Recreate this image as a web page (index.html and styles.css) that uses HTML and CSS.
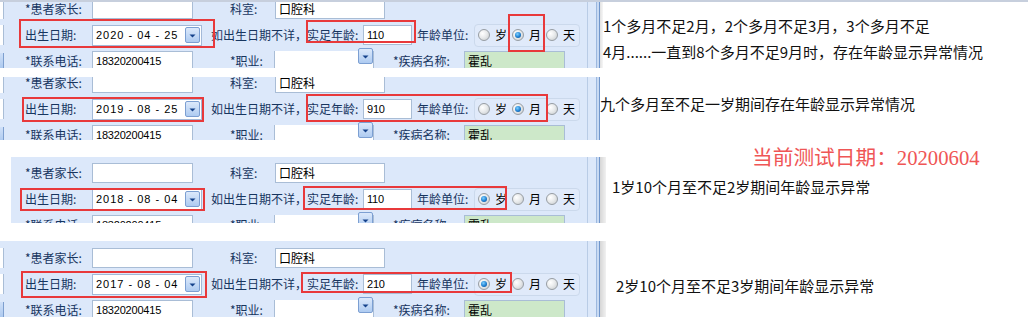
FILE: index.html
```html
<!DOCTYPE html>
<html lang="zh-CN">
<head>
<meta charset="utf-8">
<title>年龄显示异常测试</title>
<link rel="stylesheet" href="styles.css">
</head>
<body>
<div class="topline"></div>

<section class="strip strip1">
  <div class="shot shot1">
    <div class="form form1">
      <div class="row">
        <span class="edge"></span>
        <span class="lbl lbl-a">*患者家长:</span>
        <span class="inp inp-a"></span>
        <span class="lbl lbl-b">科室:</span>
        <span class="inp inp-b">口腔科</span>
      </div>
      <div class="row">
        <span class="edge"></span>
        <span class="lbl lbl-a">出生日期:</span>
        <span class="date"><span class="date-txt">2020 - 04 - 25</span><span class="ddbtn"><svg viewBox="0 0 13 14" width="13" height="14"><path d="M3.5 6.5h6l-3 3z" fill="#15428b"/></svg></span></span>
        <span class="lbl note">如出生日期不详，</span>
        <span class="lbl lbl-age">实足年龄:</span>
        <span class="inp inp-age num">110</span>
        <span class="lbl lbl-unit">年龄单位:</span>
        <span class="radios">
          <span class="opt"><i class="rb"></i>岁</span>
          <span class="opt"><i class="rb on"></i>月</span>
          <span class="opt"><i class="rb"></i>天</span>
        </span>
      </div>
      <div class="row">
        <span class="edge edge-btn"></span>
        <span class="lbl lbl-a">*联系电话:</span>
        <span class="inp inp-a num">18320200415</span>
        <span class="lbl lbl-c">*职业:</span>
        <span class="select"><span class="ddbtn"><svg viewBox="0 0 13 14" width="13" height="14"><path d="M3.5 6.5h6l-3 3z" fill="#15428b"/></svg></span></span>
        <span class="lbl lbl-dis">*疾病名称:</span>
        <span class="inp inp-green">霍乱</span>
      </div>
      <span class="mark m1a"></span>
      <span class="mark m1b"></span>
      <span class="mark m1c"></span>
    </div>
    <span class="vlight"></span>
    <span class="vblue"></span>
    <span class="vshade"></span>
  </div>
  <div class="notes notes1">
    <p>1个多月不足2月，2个多月不足3月，3个多月不足</p>
    <p>4月......一直到8个多月不足9月时，存在年龄显示异常情况</p>
  </div>
</section>

<section class="strip strip2">
  <div class="shot shot2">
    <div class="form form2">
      <div class="row">
        <span class="edge"></span>
        <span class="lbl lbl-a">*患者家长:</span>
        <span class="inp inp-a"></span>
        <span class="lbl lbl-b">科室:</span>
        <span class="inp inp-b">口腔科</span>
      </div>
      <div class="row">
        <span class="edge"></span>
        <span class="lbl lbl-a">出生日期:</span>
        <span class="date"><span class="date-txt">2019 - 08 - 25</span><span class="ddbtn"><svg viewBox="0 0 13 14" width="13" height="14"><path d="M3.5 6.5h6l-3 3z" fill="#15428b"/></svg></span></span>
        <span class="lbl note">如出生日期不详，</span>
        <span class="lbl lbl-age">实足年龄:</span>
        <span class="inp inp-age num">910</span>
        <span class="lbl lbl-unit">年龄单位:</span>
        <span class="radios">
          <span class="opt"><i class="rb"></i>岁</span>
          <span class="opt"><i class="rb on"></i>月</span>
          <span class="opt"><i class="rb"></i>天</span>
        </span>
      </div>
      <div class="row">
        <span class="edge edge-btn"></span>
        <span class="lbl lbl-a">*联系电话:</span>
        <span class="inp inp-a num">18320200415</span>
        <span class="lbl lbl-c">*职业:</span>
        <span class="select"><span class="ddbtn"><svg viewBox="0 0 13 14" width="13" height="14"><path d="M3.5 6.5h6l-3 3z" fill="#15428b"/></svg></span></span>
        <span class="lbl lbl-dis">*疾病名称:</span>
        <span class="inp inp-green">霍乱</span>
      </div>
      <span class="mark m2a"></span>
      <span class="mark m2b"></span>
    </div>
    <span class="vlight"></span>
    <span class="vblue"></span>
  </div>
  <div class="notes notes2">
    <p>九个多月至不足一岁期间存在年龄显示异常情况</p>
  </div>
</section>

<section class="strip strip3">
  <div class="shot shot3">
    <div class="form form3">
      <div class="row">
        <span class="edge"></span>
        <span class="lbl lbl-a">*患者家长:</span>
        <span class="inp inp-a"></span>
        <span class="lbl lbl-b">科室:</span>
        <span class="inp inp-b">口腔科</span>
      </div>
      <div class="row">
        <span class="edge"></span>
        <span class="lbl lbl-a">出生日期:</span>
        <span class="date"><span class="date-txt">2018 - 08 - 04</span><span class="ddbtn"><svg viewBox="0 0 13 14" width="13" height="14"><path d="M3.5 6.5h6l-3 3z" fill="#15428b"/></svg></span></span>
        <span class="lbl note">如出生日期不详，</span>
        <span class="lbl lbl-age">实足年龄:</span>
        <span class="inp inp-age num">110</span>
        <span class="lbl lbl-unit">年龄单位:</span>
        <span class="radios">
          <span class="opt"><i class="rb on"></i>岁</span>
          <span class="opt"><i class="rb"></i>月</span>
          <span class="opt"><i class="rb"></i>天</span>
        </span>
      </div>
      <div class="row">
        <span class="edge edge-btn"></span>
        <span class="lbl lbl-a">*联系电话:</span>
        <span class="inp inp-a num">18320200415</span>
        <span class="lbl lbl-c">*职业:</span>
        <span class="select"><span class="ddbtn"><svg viewBox="0 0 13 14" width="13" height="14"><path d="M3.5 6.5h6l-3 3z" fill="#15428b"/></svg></span></span>
        <span class="lbl lbl-dis">*疾病名称:</span>
        <span class="inp inp-green">霍乱</span>
      </div>
      <span class="mark m3a"></span>
      <span class="mark m3b"></span>
    </div>
    <span class="vlight"></span>
    <span class="vblue"></span>
    <span class="vgray"></span>
  </div>
  <div class="notes notes3">
    <h2 class="testdate">当前测试日期：20200604</h2>
    <p>1岁10个月至不足2岁期间年龄显示异常</p>
  </div>
</section>

<section class="strip strip4">
  <div class="shot shot4">
    <div class="form form4">
      <div class="row">
        <span class="edge"></span>
        <span class="lbl lbl-a">*患者家长:</span>
        <span class="inp inp-a"></span>
        <span class="lbl lbl-b">科室:</span>
        <span class="inp inp-b">口腔科</span>
      </div>
      <div class="row">
        <span class="edge"></span>
        <span class="lbl lbl-a">出生日期:</span>
        <span class="date"><span class="date-txt">2017 - 08 - 04</span><span class="ddbtn"><svg viewBox="0 0 13 14" width="13" height="14"><path d="M3.5 6.5h6l-3 3z" fill="#15428b"/></svg></span></span>
        <span class="lbl note">如出生日期不详，</span>
        <span class="lbl lbl-age">实足年龄:</span>
        <span class="inp inp-age num">210</span>
        <span class="lbl lbl-unit">年龄单位:</span>
        <span class="radios">
          <span class="opt"><i class="rb on"></i>岁</span>
          <span class="opt"><i class="rb"></i>月</span>
          <span class="opt"><i class="rb"></i>天</span>
        </span>
      </div>
      <div class="row">
        <span class="edge edge-btn"></span>
        <span class="lbl lbl-a">*联系电话:</span>
        <span class="inp inp-a num">18320200415</span>
        <span class="lbl lbl-c">*职业:</span>
        <span class="select"><span class="ddbtn"><svg viewBox="0 0 13 14" width="13" height="14"><path d="M3.5 6.5h6l-3 3z" fill="#15428b"/></svg></span></span>
        <span class="lbl lbl-dis">*疾病名称:</span>
        <span class="inp inp-green">霍乱</span>
      </div>
      <span class="mark m4a"></span>
      <span class="mark m4b"></span>
    </div>
    <span class="vlight"></span>
    <span class="vblue"></span>
    <span class="vgray"></span>
  </div>
  <div class="notes notes4">
    <p>2岁10个月至不足3岁期间年龄显示异常</p>
  </div>
</section>
</body>
</html>
```

FILE: styles.css
```css
* { box-sizing: border-box; margin: 0; padding: 0; }
html, body { background: #ffffff; }
body {
  width: 1028px;
  height: 317px;
  overflow: hidden;
  font-family: "Noto Sans CJK SC", "Noto Sans", sans-serif;
  color: #000;
}

.topline { height: 2px; background: #c7cfdd; }

.strip { display: flex; align-items: flex-start; }
.strip1 { height: 66px; }
.strip2 { margin-top: 9px; height: 63px; }
.strip3 { margin-top: 1px; height: 82px; }
.strip4 { margin-top: 18px; height: 76px; }

.shot {
  display: flex;
  flex: none;
  height: 100%;
  overflow: hidden;
  background: #dce8fa;
}
.shot1 { width: 603px; }
.shot2 { width: 600px; }
.shot3 { width: 595px; height: 66px; margin-top: 16px; margin-left: 11px; }
.shot4 { width: 606px; }

.form {
  position: relative;
  flex: none;
  width: 587px;
  display: flex;
  flex-direction: column;
  gap: 6px;
}
.form1 { margin-top: -3px; }
.form2 { margin-top: -4px; }
.form3 { margin-top: 6px; margin-left: -11px; }
.form4 { margin-top: 7px; }

.row {
  display: flex;
  align-items: center;
  height: 20px;
  font-size: 12px;
  line-height: 20px;
  white-space: nowrap;
}

.edge {
  flex: none;
  width: 4px;
  height: 20px;
  background: #fff;
  border-right: 1px solid #a9bdd6;
}
.edge-btn {
  height: 17px;
  background: linear-gradient(#cfe0f8, #a8c6ee);
  border-right: 1px solid #7d9fcf;
}

.lbl { flex: none; color: #17355f; }
.lbl-a { margin-left: 21px; width: 67px; }
.lbl-b { margin-left: 37px; width: 45px; }
.lbl-c { margin-left: 37px; width: 44px; }
.note { margin-left: 9px; width: 96px; }
.lbl-age { width: 56px; }
.lbl-unit { margin-left: 5px; width: 57px; }
.lbl-dis { margin-left: 19px; width: 71px; }

.inp {
  flex: none;
  height: 20px;
  background: #fff;
  border: 1px solid #a9bdd6;
  padding-left: 3px;
  line-height: 18px;
  color: #000;
}
.inp-a { width: 101px; }
.inp-b { width: 110px; }
.inp-age { width: 49px; }
.inp-green { width: 101px; background: #cde8c9; }

.num {
  font-family: "Liberation Sans", Arial, sans-serif;
  font-size: 11px;
  letter-spacing: -0.2px;
}

.date {
  flex: none;
  display: flex;
  align-items: center;
  justify-content: space-between;
  width: 110px;
  height: 21px;
  background: #fff;
  border: 1px solid #a3b9d8;
  padding: 0 1px 0 3px;
}
.date-txt {
  font-family: "Liberation Sans", Arial, sans-serif;
  font-size: 11px;
  letter-spacing: 1px;
  white-space: pre;
  color: #000;
}

.select {
  flex: none;
  display: flex;
  align-items: flex-start;
  justify-content: flex-end;
  width: 100px;
  height: 20px;
  background: #fff;
  border: 1px solid #a9bdd6;
  border-top: 0;
}

.ddbtn {
  display: flex;
  align-items: center;
  justify-content: center;
  width: 15px;
  height: 16px;
  border: 1px solid #7c9fd2;
  border-radius: 2px;
  background: linear-gradient(#dce9fb, #aecbf1);
}
.select .ddbtn { margin-top: -3px; }

.radios {
  flex: none;
  display: flex;
  align-items: center;
  gap: 5px;
  width: 106px;
  height: 23px;
  border: 1px solid #cbd9ec;
  border-radius: 4px;
  padding-left: 3px;
  background: #e0eafa;
}
.opt {
  display: flex;
  align-items: center;
  gap: 5px;
  color: #000;
  font-size: 12px;
}
.rb {
  position: relative;
  width: 12px;
  height: 12px;
  border-radius: 50%;
  border: 1px solid #979da3;
  background: radial-gradient(circle at 35% 35%, #ffffff 0%, #e9ebec 45%, #c4c8cb 100%);
}
.rb.on::after {
  content: "";
  position: absolute;
  left: 2px;
  top: 2px;
  width: 6px;
  height: 6px;
  border-radius: 50%;
  background: radial-gradient(circle at 40% 35%, #7fd0ff 0%, #1d7fd1 55%, #0b3f86 100%);
}

.mark {
  position: absolute;
  border: 2px solid #e8393b;
}
.m1a { left: 19px; top: 20px; width: 196px; height: 29px; }
.m1b { left: 306px; top: 21px; width: 110px; height: 23px; }
.m1c { left: 508px; top: 15px; width: 37px; height: 38px; }
.m2a { left: 22px; top: 24px; width: 182px; height: 25px; }
.m2b { left: 306px; top: 21px; width: 242px; height: 28px; }
.m3a { left: 20px; top: 25px; width: 185px; height: 23px; }
.m3b { left: 303px; top: 23px; width: 204px; height: 24px; }
.m4a { left: 21px; top: 23px; width: 186px; height: 27px; }
.m4b { left: 301px; top: 24px; width: 211px; height: 21px; }

.vlight { flex: none; width: 1px; background: #b9cce6; }
.vblue {
  flex: none;
  width: 4px;
  margin-left: 8px;
  border-left: 1px solid #9cb8df;
  border-right: 1px solid #6f95cb;
  background: #c8daf3;
}
.vshade { flex: none; width: 3px; background: linear-gradient(90deg, #e2e2e2, #f6f6f6); }
.vgray { flex: none; width: 6px; background: linear-gradient(90deg, #d6d6d6, #f1f1f1); }

.notes {
  flex: 1;
  font-size: 15px;
  color: #111;
  white-space: nowrap;
}
.notes1 { padding-top: 11px; line-height: 26px; }
.notes2 { padding-top: 17px; line-height: 20px; }
.notes3 { padding-top: 4px; line-height: 20px; }
.notes3 p { margin-left: 6px; margin-top: 6px; }
.notes4 { padding-top: 35px; line-height: 20px; }
.notes4 p { margin-left: 10px; }

.testdate {
  margin-left: 146px;
  font-family: "Liberation Serif", "Noto Sans CJK SC", serif;
  font-weight: normal;
  font-size: 20.7px;
  line-height: 26px;
  color: #ef5656;
}
```
